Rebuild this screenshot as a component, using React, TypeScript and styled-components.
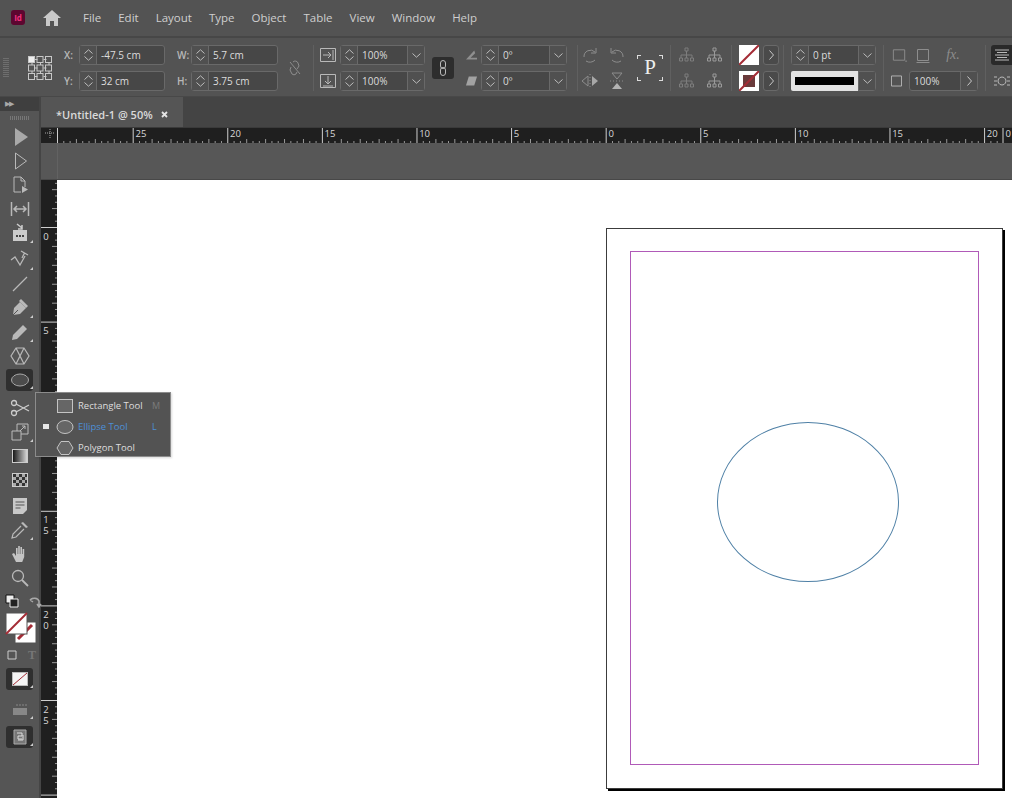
import React from 'react';
import styled, { createGlobalStyle } from 'styled-components';

const GlobalStyle = createGlobalStyle`
    html, body { margin: 0; padding: 0; background: #535353; }
    * { box-sizing: border-box; }
`;

const font = `"Open Sans", "Noto Sans", sans-serif`;
const iconGrey = '#b9b9b9';
const dimGrey = '#8d8d8d';

const Root = styled.div`
    width: 1012px;
    height: 798px;
    overflow: hidden;
    display: flex;
    flex-direction: column;
    background: #535353;
    font-family: ${font};
`;

/* menu bar */
const MenuBar = styled.div`
    height: 38px;
    flex: none;
    display: flex;
    align-items: center;
    padding-left: 11px;
    border-bottom: 2px solid #474747;
    padding-bottom: 1px;
`;
const AppLogo = styled.div`
    width: 14px;
    height: 15px;
    border-radius: 3px;
    background: #5d0630;
    color: #f0307f;
    font-size: 8px;
    font-weight: 700;
    line-height: 15px;
    text-align: center;
`;
const HomeIcon = styled.svg`
    width: 18px;
    height: 16px;
    margin-left: 18px;
    margin-right: 22px;
`;
const MenuItems = styled.div`
    display: flex;
    gap: 17px;
`;
const MenuItem = styled.span`
    font-size: 11.5px;
    color: #cfcfcf;
`;

/* control panel */
const ControlBar = styled.div`
    height: 59px;
    flex: none;
    display: flex;
    align-items: flex-start;
    padding-top: 7px;
    border-bottom: 1px solid #484848;
`;
const Col = styled.div<{ $w: number; $ml?: number }>`
    flex: none;
    width: ${(p) => p.$w}px;
    margin-left: ${(p) => p.$ml ?? 0}px;
    display: grid;
    grid-template-rows: 20px 20px;
    row-gap: 6px;
`;
const Row = styled.div<{ $gap?: number }>`
    display: flex;
    align-items: center;
    gap: ${(p) => p.$gap ?? 0}px;
    height: 20px;
`;
const Sep = styled.div<{ $ml: number }>`
    flex: none;
    width: 1px;
    height: 46px;
    margin-left: ${(p) => p.$ml}px;
    background: #606060;
`;
const Grip = styled.div`
    flex: none;
    width: 6px;
    height: 20px;
    margin: 13px 0 0 3px;
    background: repeating-linear-gradient(#6e6e6e 0 1px, transparent 1px 2px);
`;
const RefGrid = styled.svg`
    flex: none;
    width: 26px;
    height: 26px;
    margin: 10px 0 0 19px;
`;
const FieldLabel = styled.label<{ $w: number }>`
    flex: none;
    width: ${(p) => p.$w}px;
    font-size: 10px;
    font-weight: 600;
    color: #b8b8b8;
`;
const Field = styled.div<{ $w: number }>`
    flex: none;
    width: ${(p) => p.$w}px;
    height: 20px;
    display: flex;
    align-items: stretch;
    background: #474747;
    border: 1px solid #696969;
    border-radius: 3px;
`;
const Stepper = styled.div`
    flex: none;
    width: 17px;
    display: flex;
    flex-direction: column;
    align-items: center;
    justify-content: center;
    gap: 2px;
    background: #505050;
    border-right: 1px solid #696969;
`;
const FieldValue = styled.div`
    flex: 1;
    min-width: 0;
    padding-left: 4px;
    font-size: 10px;
    line-height: 18px;
    color: #dcdcdc;
    white-space: nowrap;
`;
const DropCell = styled.div`
    flex: none;
    width: 17px;
    display: flex;
    align-items: center;
    justify-content: center;
    background: #505050;
    border-left: 1px solid #696969;
`;
const ChevronSvg = styled.svg`
    display: block;
    width: 9px;
    height: 5px;
`;
const ChevronRight = styled.svg`
    display: block;
    width: 5px;
    height: 10px;
`;
const IconCell = styled.div<{ $w?: number }>`
    flex: none;
    width: ${(p) => p.$w ?? 24}px;
    height: 20px;
    display: flex;
    align-items: center;
    justify-content: center;
`;
const UnlinkCell = styled.div`
    flex: none;
    width: 18px;
    height: 20px;
    margin: 13px 0 0 8px;
    display: flex;
    align-items: center;
    justify-content: center;
`;
const LinkButton = styled.div`
    flex: none;
    width: 22px;
    height: 22px;
    margin: 12px 0 0 7px;
    border-radius: 3px;
    background: #2d2d2d;
    display: flex;
    align-items: center;
    justify-content: center;
`;
const PreviewP = styled.div`
    flex: none;
    position: relative;
    width: 26px;
    height: 26px;
    margin: 10px 0 0 8px;
    font-family: "Liberation Serif", serif;
    font-size: 21px;
    line-height: 25px;
    text-align: center;
    color: #eee;
    background:
        linear-gradient(#ddd, #ddd) 0 0 / 4px 1px, linear-gradient(#ddd, #ddd) 0 0 / 1px 4px,
        linear-gradient(#ddd, #ddd) 100% 0 / 4px 1px, linear-gradient(#ddd, #ddd) 100% 0 / 1px 4px,
        linear-gradient(#ddd, #ddd) 0 100% / 4px 1px, linear-gradient(#ddd, #ddd) 0 100% / 1px 4px,
        linear-gradient(#ddd, #ddd) 100% 100% / 4px 1px, linear-gradient(#ddd, #ddd) 100% 100% / 1px 4px;
    background-repeat: no-repeat;
`;
const Swatch = styled.svg`
    flex: none;
    width: 20px;
    height: 20px;
`;
const ArrowButton = styled.div`
    flex: none;
    width: 16px;
    height: 20px;
    margin-left: 4px;
    display: flex;
    align-items: center;
    justify-content: center;
    background: #4a4a4a;
    border: 1px solid #696969;
    border-radius: 3px;
`;
const StrokePreview = styled.div`
    flex: 1;
    margin: -1px 0 -1px -1px;
    padding: 6px 4px;
    background: #e2e2e2;
    border-radius: 2px 0 0 2px;
`;
const StrokeBar = styled.div`
    height: 8px;
    background: #000;
`;
const FxMark = styled.span`
    font-family: "Liberation Serif", serif;
    font-style: italic;
    font-size: 14px;
    color: ${dimGrey};
`;
const DarkToggle = styled.div`
    width: 21px;
    height: 20px;
    border-radius: 3px 0 0 3px;
    background: #2a2a2a;
    display: flex;
    align-items: center;
    justify-content: center;
`;

/* main area */
const Main = styled.div`
    flex: 1;
    min-height: 0;
    display: flex;
`;
const Toolbar = styled.div`
    flex: none;
    position: relative;
    width: 41px;
    display: flex;
    flex-direction: column;
    background: #555;
    border-right: 2px solid #454545;
`;
const ToolbarHead = styled.div`
    height: 14px;
    background: #3f3f3f;
    color: #a8a8a8;
    font-size: 7px;
    line-height: 14px;
    padding-left: 5px;
    letter-spacing: -1px;
`;
const ToolbarGrip = styled.div`
    height: 14px;
    display: flex;
    justify-content: center;
    align-items: center;
    &::before {
        content: '';
        width: 19px;
        height: 4px;
        background: repeating-linear-gradient(90deg, #777 0 1px, transparent 1px 2px);
    }
`;
const Tool = styled.div<{ $gap?: number; $active?: boolean; $more?: boolean }>`
    position: relative;
    flex: none;
    width: 27px;
    height: ${(p) => (p.$active ? 22 : 24)}px;
    margin: ${(p) => (p.$gap ?? 0) + (p.$active ? 1 : 0)}px 0 ${(p) => (p.$active ? 1 : 0)}px 6px;
    display: flex;
    align-items: center;
    justify-content: center;
    border-radius: 3px;
    background: ${(p) => (p.$active ? '#2f2f2f' : 'transparent')};
    &::after {
        content: ${(p) => (p.$more ? "''" : 'none')};
        position: absolute;
        right: 0;
        bottom: 2px;
        border-style: solid;
        border-width: 0 0 3px 3px;
        border-color: transparent transparent #ccc transparent;
    }
`;
const ToolIcon = styled.svg`
    width: 20px;
    height: 20px;
    display: block;
`;
const MiniRow = styled.div<{ $top: number }>`
    flex: none;
    height: 14px;
    margin-top: ${(p) => p.$top}px;
    padding: 0 5px;
    display: flex;
    align-items: center;
    gap: 9px;
`;
const MiniIcon = styled.svg`
    flex: none;
    width: 14px;
    height: 14px;
    display: block;
`;
const TypeMark = styled.span`
    font-family: "Liberation Serif", serif;
    font-size: 12px;
    font-weight: 700;
    color: #777;
    line-height: 14px;
`;
const FillStroke = styled.svg`
    flex: none;
    width: 32px;
    height: 32px;
    margin: 4px 0 0 5px;
    display: block;
`;

/* tool flyout */
const Flyout = styled.div`
    position: absolute;
    left: 35px;
    top: 295px;
    z-index: 5;
    width: 136px;
    height: 65px;
    padding: 2px 0 0;
    background: #535353;
    border: 1px solid #8c8c8c;
    box-shadow: 1px 1px 2px rgba(0, 0, 0, 0.15);
`;
const FlyoutRow = styled.div<{ $on?: boolean }>`
    height: 21px;
    display: flex;
    align-items: center;
    font-size: 9.5px;
    color: ${(p) => (p.$on ? '#4d8fd6' : '#dedede')};
`;
const FlyoutMark = styled.div<{ $on?: boolean }>`
    flex: none;
    width: 6px;
    height: 5px;
    margin: 0 7px 0 7px;
    background: ${(p) => (p.$on ? '#e6e6e6' : 'transparent')};
`;
const FlyoutIcon = styled.svg`
    flex: none;
    width: 18px;
    height: 16px;
    margin-right: 4px;
`;
const FlyoutName = styled.span`
    flex: 1;
    white-space: nowrap;
`;
const FlyoutKey = styled.span<{ $on?: boolean }>`
    flex: none;
    width: 18px;
    font-size: 9px;
    color: ${(p) => (p.$on ? '#4d8fd6' : '#7b7b7b')};
`;

/* document area */
const Workspace = styled.div`
    flex: 1;
    min-width: 0;
    display: flex;
    flex-direction: column;
`;
const TabRow = styled.div`
    flex: none;
    height: 31px;
    display: flex;
    background: #444;
    border-bottom: 1px solid #3a3a3a;
`;
const Tab = styled.div`
    width: 142px;
    display: flex;
    align-items: center;
    padding: 4px 15px 0 15px;
    justify-content: space-between;
    background: #555;
    font-size: 11px;
    font-weight: 600;
    color: #dadada;
    white-space: nowrap;
`;
const TabClose = styled.svg`
    flex: none;
    width: 7px;
    height: 7px;
`;
const HRuler = styled.svg`
    flex: none;
    display: block;
    width: 971px;
    height: 15px;
    background: #1f1f1f;
`;
const Pasteboard = styled.div`
    flex: none;
    height: 37px;
    background: #575757;
    border-bottom: 1px solid #484848;
    padding-left: 16px;
    &::before {
        content: '';
        display: block;
        width: 1px;
        height: 100%;
        background: #626262;
    }
`;
const DocRow = styled.div`
    flex: 1;
    min-height: 0;
    display: flex;
`;
const VRuler = styled.svg`
    flex: none;
    display: block;
    width: 16px;
    height: 618px;
    background: #1f1f1f;
`;
const VRulerLabel = styled.text`
    writing-mode: vertical-rl;
    text-orientation: upright;
    letter-spacing: -2px;
    font-size: 9.5px;
    fill: #d8d8d8;
`;
const Canvas = styled.div`
    flex: 1;
    background: #fff;
    padding: 48px 0 0 549px;
`;
const Page = styled.div`
    position: relative;
    width: 397px;
    height: 561px;
    padding: 22px 23px;
    background: #fff;
    border: 1px solid #3c3c3c;
    box-shadow: 2px 2px 0 #000;
`;
const MarginGuide = styled.div`
    width: 349px;
    height: 514px;
    border: 1px solid #b05ab8;
`;
const EllipseShape = styled.div`
    position: absolute;
    left: 110px;
    top: 193px;
    width: 182px;
    height: 160px;
    border: 1px solid #4f80a6;
    border-radius: 50%;
`;

/* small drawings */
const Chevron = ({ up }: { up?: boolean }) => (
    <ChevronSvg viewBox="0 0 9 5" fill="none" stroke="#bdbdbd" strokeWidth="1">
        <path d={up ? 'M0.5 4.5 4.5 0.8 8.5 4.5' : 'M0.5 0.5 4.5 4.2 8.5 0.5'} />
    </ChevronSvg>
);

const Right = () => (
    <ChevronRight viewBox="0 0 5 10" fill="none" stroke="#c8c8c8" strokeWidth="1">
        <path d="M0.5 0.5 4.5 5 0.5 9.5" />
    </ChevronRight>
);

const NumField = ({ w, value, drop }: { w: number; value: string; drop?: boolean }) => (
    <Field $w={w}>
        <Stepper>
            <Chevron up />
            <Chevron />
        </Stepper>
        <FieldValue>{value}</FieldValue>
        {drop && (
            <DropCell>
                <Chevron />
            </DropCell>
        )}
    </Field>
);

const Glyph = ({ d, w = 18, h = 18, fill, box, color = iconGrey }: { d: string; w?: number; h?: number; fill?: string; box?: string; color?: string }) => (
    <svg width={w} height={h} viewBox={box ?? '0 0 18 18'} fill={fill ?? 'none'} stroke={fill ? 'none' : color} strokeWidth="1">
        <path d={d} />
    </svg>
);

const refCells = [0, 1, 2].flatMap((r) => [0, 1, 2].map((c) => ({ r, c })));

const orgPath = 'M7 2h3v3h-3zM8.5 5v4M3 9h11M3 9v3M8.5 9v3M14 9v3M1.5 12h3v3h-3zM7 12h3v3h-3zM12.5 12h3v3h-3z';

const NoneSwatch = ({ inner }: { inner?: boolean }) => (
    <Swatch viewBox="0 0 20 20">
        <rect width="20" height="20" fill="#fff" />
        {inner && <rect x="4" y="4" width="12" height="12" fill="#6a3b3b" />}
        <path d="M0 20 20 0" stroke="#a42c36" strokeWidth="2" />
    </Swatch>
);

const tools: { gap?: number; active?: boolean; more?: boolean; icon: React.ReactNode }[] = [
    { icon: <path d="M5 1v18l13-9z" fill="#a9a9a9" /> },
    { icon: <path d="M5.500 2v16l11-8z" fill="none" stroke={iconGrey} /> },
    { icon: <><path d="M4 2h7l4 4v6M4 2v15h7M11 2v4h4" fill="none" stroke={iconGrey} /><path d="M12 11v7l6-3.500z" fill={iconGrey} /></> },
    { icon: <path d="M1.500 3v14M18.500 3v14M4 10h12M7 7l-3 3 3 3M13 7l3 3-3 3" fill="none" stroke={iconGrey} strokeWidth="1.500" /> },
    { more: true, icon: <><path d="M3 7h14v11H3z" fill="#ccc" /><path d="M7 1l5 4M12 2v4H8" fill="none" stroke="#ccc" strokeWidth="1.500" /><path d="M6 12h2v2H6zM9 12h2v2H9zM12 12h2v2h-2z" fill="#444" /></> },
    { gap: 3, more: true, icon: <path d="M1 10l4-3 5 8 5-9M11 1l7 4M14.500 3l-2.500 5" fill="none" stroke={iconGrey} strokeWidth="1.300" /> },
    { icon: <path d="M3 17 17 3" fill="none" stroke={iconGrey} strokeWidth="1.200" /> },
    { more: true, icon: <><path d="M3 17l1-7 6-6 6 6-6 6z" fill={iconGrey} /><path d="M9 3l2-2 7 7-2 2z" fill={iconGrey} /><path d="M3 17l5-5" stroke="#555" /></> },
    { more: true, icon: <path d="M2 18l1-5L13 3l4 4L7 17z" fill={iconGrey} /> },
    { icon: <path d="M6 2h8l5 8-5 8H6l-5-8zM6 2l8 16M14 2 6 18" fill="none" stroke={iconGrey} strokeWidth="1.200" /> },
    { active: true, more: true, icon: <ellipse cx="10" cy="10" rx="8.500" ry="6" fill="#4c4c4c" stroke="#a8a8a8" /> },
    { gap: 4, icon: <><circle cx="4" cy="5" r="2.500" fill="none" stroke="#ccc" strokeWidth="1.300" /><circle cx="4" cy="15" r="2.500" fill="none" stroke="#ccc" strokeWidth="1.300" /><path d="M6 6l13 7M6 14 19 7" stroke="#ccc" strokeWidth="1.300" /></> },
    { more: true, icon: <path d="M2 9h9v9H2zM7 2h11v10h-7M7 2v7M10 9l5-5M12 4h3v3" fill="none" stroke="#bbb" /> },
    { icon: <><defs><linearGradient id="grad"><stop offset="0" stopColor="#111" /><stop offset="1" stopColor="#ddd" /></linearGradient></defs><rect x="2.500" y="3.500" width="15" height="13" fill="url(#grad)" stroke="#ccc" /></> },
    { icon: <><rect x="2.500" y="3.500" width="15" height="13" fill="#aaa" stroke="#ccc" /><path d="M3 4h3v3H3zM9 4h3v3H9zM15 4h2v3h-2zM6 7h3v3H6zM12 7h3v3h-3zM3 10h3v3H3zM9 10h3v3H9zM15 10h2v3h-2zM6 13h3v3H6zM12 13h3v3h-3z" fill="#333" /></> },
    { gap: 2, icon: <><path d="M3 2h14v12l-4 4H3z" fill="#c8c8c8" /><path d="M5.500 6h9M5.500 9h9M5.500 12h5" stroke="#555" /></> },
    { more: true, icon: <><path d="M13 2l5 5-2 1-5-5z" fill={iconGrey} /><path d="M11 6 3 14l-1 4 4-1 8-8" fill="none" stroke={iconGrey} strokeWidth="1.200" /></> },
    { icon: <path d="M6 18 2 10l2-1 2 3V4h1.600v6h.6V2h1.600v8h.6V3h1.600v7h.6V5h1.600v8l-2 5z" fill="#c4c4c4" /> },
    { icon: <><circle cx="8" cy="8" r="5.500" fill="none" stroke={iconGrey} strokeWidth="1.300" /><path d="M12 12l6 6" stroke={iconGrey} strokeWidth="1.800" /></> },
];

// ruler scale: 18.92px to the centimetre, three small divisions per centimetre
const cmH = 18.92;
const hTicks: { x: number; size: number }[] = [];
for (let i = 0; i < 157; i++) {
    const x = 16.5 + (i * cmH) / 3;
    if (x > 962) break;
    hTicks.push({ x, size: i === 0 || i % 15 === 12 ? 15 : i % 3 === 0 ? 4 : 2 });
}
const hLabels = [
    { x: 92.5, t: '25' }, { x: 187, t: '20' }, { x: 281.6, t: '15' }, { x: 376.2, t: '10' }, { x: 470.8, t: '5' },
    { x: 565.4, t: '0' }, { x: 660, t: '5' }, { x: 754.6, t: '10' }, { x: 849.2, t: '15' }, { x: 943.8, t: '20' }, { x: 962.5, t: '0' },
];
const vTicks: { y: number; size: number }[] = [];
for (let i = -9; i < 100; i++) {
    const y = 47.5 + (i * cmH) / 3;
    if (y > 618) break;
    vTicks.push({ y, size: i % 15 === 0 ? 16 : i % 3 === 0 ? 5 : 2 });
}
const vLabels = [
    { y: 47.5, t: '0' }, { y: 142.1, t: '5' }, { y: 236.7, t: '10' }, { y: 331.3, t: '15' }, { y: 425.9, t: '20' }, { y: 520.5, t: '25' },
];

const App = () => (
    <Root>
        <GlobalStyle />
        <MenuBar>
            <AppLogo>Id</AppLogo>
            <HomeIcon viewBox="0 0 18 16">
                <path d="M9 0 0 8h3v8h4v-5h4v5h4V8h3z" fill="#c9c9c9" />
            </HomeIcon>
            <MenuItems>
                {['File', 'Edit', 'Layout', 'Type', 'Object', 'Table', 'View', 'Window', 'Help'].map((m) => (
                    <MenuItem key={m}>{m}</MenuItem>
                ))}
            </MenuItems>
        </MenuBar>

        <ControlBar>
            <Grip />
            <RefGrid viewBox="0 0 26 26" fill="none" stroke="#c8c8c8">
                <path d="M6.500 4.500h3M15.500 4.500h3M6.500 13h3M15.500 13h3M6.500 21.500h3M15.500 21.500h3M4 7v3M12.500 7v3M21 7v3M4 16v3M12.500 16v3M21 16v3" />
                {refCells.map(({ r, c }) => (
                    <rect key={`${r}-${c}`} x={0.5 + c * 8.5} y={1.5 + r * 8.5} width="6" height="6" fill={r + c === 0 ? '#eee' : 'none'} />
                ))}
            </RefGrid>
            <Col $w={101} $ml={10}>
                <Row><FieldLabel $w={15}>X:</FieldLabel><NumField w={86} value="-47.5 cm" /></Row>
                <Row><FieldLabel $w={15}>Y:</FieldLabel><NumField w={86} value="32 cm" /></Row>
            </Col>
            <Col $w={101} $ml={12}>
                <Row><FieldLabel $w={14}>W:</FieldLabel><NumField w={87} value="5.7 cm" /></Row>
                <Row><FieldLabel $w={14}>H:</FieldLabel><NumField w={87} value="3.75 cm" /></Row>
            </Col>
            <UnlinkCell>
                <Glyph color={dimGrey} d="M7 3a3 3 0 0 1 5 1l1 3-2 3M5 8l-1 3 2 4a3 3 0 0 0 4 0l1-2M4 3l10 12" />
            </UnlinkCell>
            <Sep $ml={9} />
            <Col $w={105} $ml={6}>
                <Row $gap={4}>
                    <Glyph w={16} h={16} box="0 0 16 16" d="M.5 1.500h15v13H.5zM3 8h8M8 5l3 3-3 3M13 3v10" />
                    <NumField w={85} value="100%" drop />
                </Row>
                <Row $gap={4}>
                    <Glyph w={16} h={16} box="0 0 16 16" d="M.5 1.500h15v13H.5zM8 3v8M5 8l3 3 3-3M3 13h10" />
                    <NumField w={85} value="100%" drop />
                </Row>
            </Col>
            <LinkButton>
                <Glyph w={10} h={16} box="0 0 10 16" d="M2.500 6V3a2.500 2.500 0 0 1 5 0v3a2.500 2.500 0 0 1-5 0M7.500 10v3a2.500 2.500 0 0 1-5 0v-3a2.500 2.500 0 0 1 5 0" />
            </LinkButton>
            <Col $w={101} $ml={12}>
                <Row $gap={4}>
                    <IconCell $w={11}><Glyph w={12} h={10} box="0 0 12 10" fill="#8f8f8f" d="M0 10 9 0l1 3-5 5h7v2z" /></IconCell>
                    <NumField w={86} value="0º" drop />
                </Row>
                <Row $gap={4}>
                    <IconCell $w={11}><Glyph w={12} h={10} box="0 0 12 10" fill="#a2a2a2" d="M3 0h9L9 10H0z" /></IconCell>
                    <NumField w={86} value="0º" drop />
                </Row>
            </Col>
            <Sep $ml={10} />
            <Col $w={51}>
                <Row $gap={3}>
                    <IconCell><Glyph color={dimGrey} d="M3 11a6.500 6.500 0 0 1 11-5M15 2v5h-5M5 15a7 7 0 0 0 9-1" /></IconCell>
                    <IconCell><Glyph color={dimGrey} d="M15 11A6.500 6.500 0 0 0 4 6M3 2v5h5M13 15a7 7 0 0 1-9-1" /></IconCell>
                </Row>
                <Row $gap={3}>
                    <IconCell><svg width="18" height="16" viewBox="0 0 18 16"><path d="M7 3v10L1 8z M9 1v1M9 4v1M9 7v1M9 10v1M9 13v1" fill="none" stroke={dimGrey} /><path d="M11 3v10l6-5z" fill="#a8a8a8" /></svg></IconCell>
                    <IconCell><svg width="16" height="18" viewBox="0 0 16 18"><path d="M3 1h10L8 7zM1 9h1M4 9h1M7 9h1M10 9h1M13 9h1" fill="none" stroke={dimGrey} /><path d="M3 17h10l-5-6z" fill="#b4b4b4" /></svg></IconCell>
                </Row>
            </Col>
            <PreviewP>P</PreviewP>
            <Sep $ml={7} />
            <Col $w={52} $ml={4}>
                <Row $gap={4}>
                    <IconCell><Glyph color="#7d7d7d" d={orgPath} /></IconCell>
                    <IconCell><Glyph color="#9a9a9a" d={orgPath} /></IconCell>
                </Row>
                <Row $gap={4}>
                    <IconCell><Glyph color="#7d7d7d" d={orgPath} /></IconCell>
                    <IconCell><Glyph color="#9a9a9a" d={orgPath} /></IconCell>
                </Row>
            </Col>
            <Sep $ml={4} />
            <Col $w={39} $ml={7}>
                <Row><NoneSwatch /><ArrowButton><Right /></ArrowButton></Row>
                <Row><NoneSwatch inner /><ArrowButton><Right /></ArrowButton></Row>
            </Col>
            <Sep $ml={5} />
            <Col $w={85} $ml={7}>
                <NumField w={85} value="0 pt" drop />
                <Field $w={85}>
                    <StrokePreview><StrokeBar /></StrokePreview>
                    <DropCell><Chevron /></DropCell>
                </Field>
            </Col>
            <Sep $ml={7} />
            <Col $w={87} $ml={7}>
                <Row>
                    <IconCell $w={17}><Glyph color={dimGrey} d="M2.500 3.500h12v11h-12zM15 15.500h2" /></IconCell>
                    <IconCell $w={30}><Glyph color={dimGrey} d="M3.500 3.500h11v11h-11zM2.500 16.500h13" /></IconCell>
                    <IconCell $w={30}><FxMark>fx.</FxMark></IconCell>
                </Row>
                <Row $gap={7}>
                    <IconCell $w={11}><Glyph w={12} h={12} box="0 0 12 12" d="M.5.500h11v11H.5z" /></IconCell>
                    <Field $w={69}>
                        <FieldValue>100%</FieldValue>
                        <DropCell><Right /></DropCell>
                    </Field>
                </Row>
            </Col>
            <Sep $ml={7} />
            <Col $w={21} $ml={5}>
                <DarkToggle><Glyph w={14} h={12} box="0 0 14 12" d="M0 1h14M2 3.500h10M0 6h14M2 8.500h10M0 11h14" /></DarkToggle>
                <IconCell $w={21}><Glyph w={16} h={12} box="0 0 16 12" d="M0 2h3M13 2h3M0 6h3M13 6h3M0 10h3M13 10h3M8 2a4 4 0 1 0 .01 0" /></IconCell>
            </Col>
        </ControlBar>

        <Main>
            <Toolbar>
                <ToolbarHead>▶▶</ToolbarHead>
                <ToolbarGrip />
                {tools.map((t, i) => (
                    <Tool key={i} $gap={t.gap} $active={t.active} $more={t.more}>
                        <ToolIcon viewBox="0 0 20 20">{t.icon}</ToolIcon>
                    </Tool>
                ))}
                <MiniRow $top={4}>
                    <MiniIcon viewBox="0 0 14 14">
                        <path d="M1 1h8v8H1z" fill="#eee" stroke="#111" />
                        <path d="M5 5h8v8H5z" fill="#222" stroke="#eee" />
                    </MiniIcon>
                    <MiniIcon viewBox="0 0 14 14" fill="none" stroke="#aaa" strokeWidth="1.500">
                        <path d="M2 6a5 4 0 0 1 9 1v5M9 10l2 3 2-3M2 6l3-2M2 6l3 2" />
                    </MiniIcon>
                </MiniRow>
                <FillStroke viewBox="0 0 32 32">
                    <rect x="10" y="10" width="21" height="21" fill="#fff" stroke="#555" />
                    <path d="M13 27 27 13" stroke="#a42c36" strokeWidth="3" />
                    <rect x="1" y="1" width="21" height="21" fill="#fff" stroke="#555" />
                    <path d="M1 22 22 1" stroke="#a42c36" strokeWidth="2" />
                </FillStroke>
                <MiniRow $top={4}>
                    <MiniIcon viewBox="0 0 14 14" fill="none" stroke="#ccc"><path d="M3 3h8v8H3z" /></MiniIcon>
                    <TypeMark>T</TypeMark>
                </MiniRow>
                <Tool $active $more $gap={5}>
                    <ToolIcon viewBox="0 0 20 20">
                        <rect x="2.500" y="3.500" width="15" height="13" fill="#f4f4f4" stroke="#bbb" />
                        <path d="M3 16 17 4" stroke="#a42c36" />
                    </ToolIcon>
                </Tool>
                <Tool $more $gap={6}>
                    <ToolIcon viewBox="0 0 20 20">
                        <path d="M3 9h14v7H3z" fill="#888" />
                        <path d="M7 5v2M10 5v2M13 5v2M16 5v2" stroke="#888" />
                    </ToolIcon>
                </Tool>
                <Tool $active $more $gap={4}>
                    <ToolIcon viewBox="0 0 20 20">
                        <path d="M4 3h12v14H4z" fill="#777" stroke="#aaa" />
                        <path d="M7 6h5v3H8v3h4M13 8v5H8" fill="none" stroke="#ddd" />
                    </ToolIcon>
                </Tool>
                <Flyout>
                    <FlyoutRow>
                        <FlyoutMark />
                        <FlyoutIcon viewBox="0 0 18 16"><rect x="1.500" y="1.500" width="15" height="13" fill="#666" stroke="#c4c4c4" /></FlyoutIcon>
                        <FlyoutName>Rectangle Tool</FlyoutName>
                        <FlyoutKey>M</FlyoutKey>
                    </FlyoutRow>
                    <FlyoutRow $on>
                        <FlyoutMark $on />
                        <FlyoutIcon viewBox="0 0 18 16"><ellipse cx="9" cy="8" rx="8" ry="6.500" fill="#666" stroke="#c4c4c4" /></FlyoutIcon>
                        <FlyoutName>Ellipse Tool</FlyoutName>
                        <FlyoutKey $on>L</FlyoutKey>
                    </FlyoutRow>
                    <FlyoutRow>
                        <FlyoutMark />
                        <FlyoutIcon viewBox="0 0 18 16"><path d="M5 1.500h8l4 6.500-4 6.500H5L1 8z" fill="#666" stroke="#c4c4c4" /></FlyoutIcon>
                        <FlyoutName>Polygon Tool</FlyoutName>
                    </FlyoutRow>
                </Flyout>
            </Toolbar>

            <Workspace>
                <TabRow>
                    <Tab>
                        *Untitled-1 @ 50%
                        <TabClose viewBox="0 0 7 7"><path d="M1 1l5 5M6 1 1 6" stroke="#e4e4e4" strokeWidth="1.800" /></TabClose>
                    </Tab>
                </TabRow>
                <HRuler viewBox="0 0 971 15">
                    <path d="M4 5h10M9 1v9" stroke="#aaa" strokeDasharray="1 1" />
                    {hTicks.map((t) => (
                        <line key={t.x} x1={t.x} x2={t.x} y1={15 - t.size} y2={15} stroke={t.size > 4 ? '#cfcfcf' : '#999'} />
                    ))}
                    <line x1="962" x2="962" y1="0" y2="15" stroke="#cfcfcf" />
                    {hLabels.map((l) => (
                        <text key={l.x} x={l.x + 2} y={9} fontSize="9.500" fill="#d8d8d8" fontFamily={font}>{l.t}</text>
                    ))}
                </HRuler>
                <Pasteboard />
                <DocRow>
                    <VRuler viewBox="0 0 16 618">
                        {vTicks.map((t) => (
                            <line key={t.y} x1={16 - t.size} x2={16} y1={t.y} y2={t.y} stroke={t.size > 5 ? '#cfcfcf' : '#999'} />
                        ))}
                        {vLabels.map((l) => (
                            <VRulerLabel key={l.y} x={5} y={l.y + 2}>{l.t}</VRulerLabel>
                        ))}
                    </VRuler>
                    <Canvas>
                        <Page>
                            <MarginGuide />
                            <EllipseShape />
                        </Page>
                    </Canvas>
                </DocRow>
            </Workspace>
        </Main>
    </Root>
);

export default App;
